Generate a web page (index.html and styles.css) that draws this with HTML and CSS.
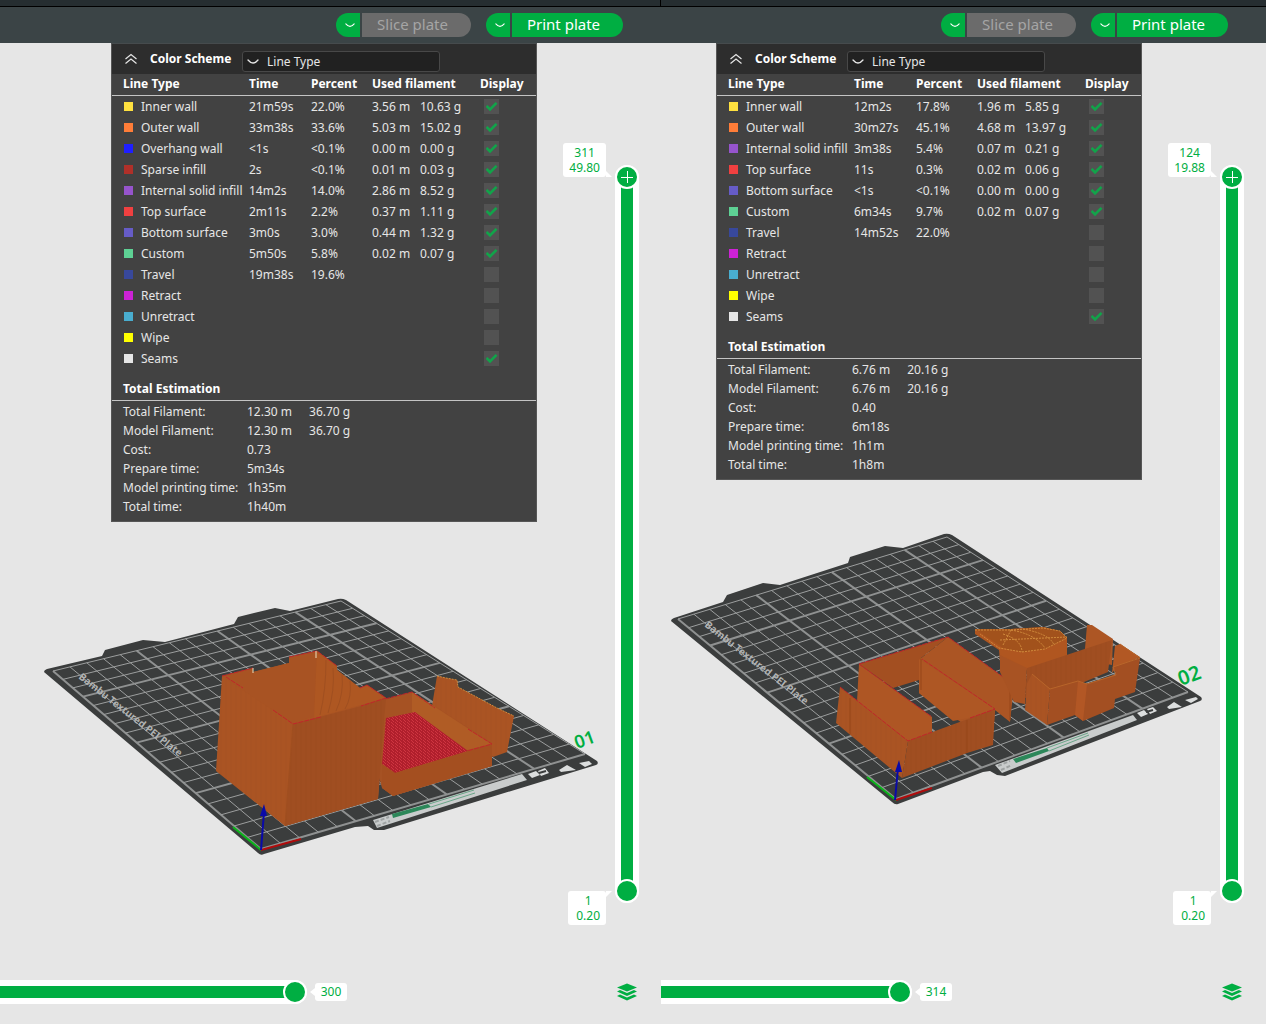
FILE: index.html
```html
<!DOCTYPE html>
<html lang="en">
<head>
<meta charset="utf-8">
<title>Plate preview</title>
<link rel="stylesheet" href="styles.css">
</head>
<body>
<svg class="defs" aria-hidden="true">
  <symbol id="chevron" viewBox="0 0 12 6"><path d="M1 1 Q6 7 11 1" fill="none" stroke="currentColor" stroke-width="1.3" stroke-linecap="round"/></symbol>
  <symbol id="collapse" viewBox="0 0 14 12"><path d="M1.500 6 L7 1.500 L12.500 6 M1.500 10.500 L7 6 L12.500 10.500" fill="none" stroke="currentColor" stroke-width="1.200"/></symbol>
  <symbol id="layers" viewBox="0 0 20 20"><path d="M10 1.500 L20 5.500 L10 9.500 L0 5.500Z M0 9.500 L3 8 L10 11 L17 8 L20 9.500 L10 14Z M0 14 L3 12.500 L10 15.500 L17 12.500 L20 14 L10 18.500Z" fill="currentColor"/></symbol>
  <pattern id="weave" width="4" height="3" patternUnits="userSpaceOnUse"><rect width="4" height="3" fill="#b01f2c"/><path d="M0 0 L2 2 M3 3 L4 2" stroke="#cf3541" stroke-width="1"/></pattern>
  <pattern id="ribs" width="5" height="8" patternUnits="userSpaceOnUse"><rect width="5" height="8" fill="#aa5423"/><path d="M1 0V8" stroke="#a65122" stroke-width="1"/></pattern>
  <pattern id="ribsDark" width="5" height="8" patternUnits="userSpaceOnUse"><rect width="5" height="8" fill="#a04e21"/><path d="M1 0V8" stroke="#9c4b1f" stroke-width="1"/></pattern>
</svg>
<main class="workspace">

<section class="pane" aria-label="Plate 01">
  <div class="tabstrip"></div>
  <div class="toolbar">
    <div class="split">
      <button class="split-menu" type="button" aria-label="Slice options"><svg class="chevron"><use href="#chevron"/></svg></button>
      <button class="split-main is-off" type="button" disabled>Slice plate</button>
    </div>
    <div class="split">
      <button class="split-menu" type="button" aria-label="Print options"><svg class="chevron"><use href="#chevron"/></svg></button>
      <button class="split-main" type="button">Print plate</button>
    </div>
  </div>
  <div class="viewport">
    <svg class="scene" viewBox="0 43 661 981" aria-hidden="true">
      <path class="plate" d="M44 672 Q44 670 47 669 L102 656 L105 650 L143 640 L165 642 L234 624 L238 617 L275 608 L290 611 L338 599 Q342 598 346 600 L597 761 Q599 764 596 765 L384 830 L374 830 L368 826 L355 827 L264 854 Q261 856 258 853Z"/>
      <g class="grid" data-corners="261,849 585,754 341,601 53,671"></g>
      <text class="brand" transform="translate(78 678) rotate(38)">Bambu Textured PEI Plate</text>
      <path d="M373 820 L522 774 L527 780 L377 828Z" fill="#c9cccc"/>
      <path d="M392 814 L428 804 L431 807 L393 818Z" fill="#2c8759"/>
      <path d="M429 804 L474 790 M431 807 L475 793" stroke="#6aa588" fill="none"/>
      <path d="M375 822 L389 817 M377 826 L390 821" stroke="#9ea2a2" stroke-width="2" stroke-dasharray="4 2"/>
      <path d="M528 774 L536 771 L540 775 L532 778Z M538 771 L545 768 L549 773 L541 776Z M559 770 L567 765 L576 770 L561 772Z M579 763 L589 761 L592 764 L585 767Z" fill="#dcdede"/>
      <path d="M539 773 L546 771" stroke="#3b3d3d" stroke-width="2"/>
      <text class="number" font-size="18" transform="translate(577 749) rotate(-20)">01</text>
      <path d="M437 676 L446 678 L457 680 L458 687 L497 708 L514 716 L507 752 L493 757 L431 712Z" fill="url(#ribs)"/>
      <path d="M437 676 L446 678 L457 680 L458 687 L497 708 L514 716" class="seam"/>
      <path d="M360 706 L412 692 L492 743 L492 766 L393 796 L382 788Z" fill="#a65223"/>
      <path d="M412 692 L412 713 L467 750 L492 744Z" fill="#b05c25"/>
      <path d="M386 718 L415 712 L468 751 L395 773 L382 764Z" fill="url(#weave)"/>
      <path d="M382 764 L395 773 L492 744 L492 766 L393 796 L382 788Z" fill="#a44f20"/>
      <path d="M385 699 L412 692 L435 708 M468 729 L492 744 L467 751" class="edge"/>
      <path d="M222 676 L253 668 L253 672 L289 663 L289 657 L317 651 L337 666 L337 670 L360 688 L367 685 L386 698 L378 799 L285 826 L216 771Z" fill="url(#ribs)"/>
      <path d="M317 651 L314 716 L293 723 L253 697 L222 676 L253 668 L253 672 L289 663 L289 657Z" fill="#a85323"/>
      <path d="M317 651 L337 666 L337 670 L360 688 L367 685 L386 698 L314 718Z" fill="#ae5722"/>
      <path d="M293 724 L361 706 L386 698 L378 799 L285 826Z" fill="url(#ribsDark)"/>
      <path d="M326 660 Q326 690 320 715 M333 668 Q335 690 328 713 M342 674 Q344 694 336 711 M350 681 Q352 697 345 709 M293 724 L285 826" stroke="#a04f20" stroke-width="1" fill="none"/>
      <path d="M222 676 L253 668 M226 677 L243 688 M273 710 L293 724 L321 717 M289 657 L317 651 L337 666 M360 688 L367 685 L386 698 L361 706" class="edge"/>
      <path d="M253 668V673 M316 651V658" stroke="#eee1bf"/>
      <path class="axis-y" d="M261 850 L233 827"/><path class="axis-x" d="M261 850 L301 839"/>
      <path class="axis-z" d="M261 850 L264 812"/><path d="M260 816 L264 804 L267 816Z" fill="#0a0aa8"/>
    </svg>

    <div class="stage">
      <section class="legend">
        <header class="legend-head">
          <button class="fold" type="button" aria-label="Collapse"><svg class="collapse"><use href="#collapse"/></svg></button>
          <label class="scheme" for="scheme1">Color Scheme</label>
          <div class="picker"><svg class="chevron"><use href="#chevron"/></svg><select id="scheme1"><option>Line Type</option></select></div>
        </header>
        <table class="lines">
          <colgroup><col class="c-name"><col class="c-time"><col class="c-pct"><col class="c-used"><col class="c-show"></colgroup>
          <thead><tr><th>Line Type</th><th>Time</th><th>Percent</th><th>Used filament</th><th>Display</th></tr></thead>
          <tbody>
            <tr><td><label for="a1"><i class="sw inner"></i>Inner wall</label></td><td>21m59s</td><td>22.0%</td><td><span>3.56 m</span>10.63 g</td><td><input id="a1" type="checkbox" checked></td></tr>
            <tr><td><label for="a2"><i class="sw outer"></i>Outer wall</label></td><td>33m38s</td><td>33.6%</td><td><span>5.03 m</span>15.02 g</td><td><input id="a2" type="checkbox" checked></td></tr>
            <tr><td><label for="a3"><i class="sw overhang"></i>Overhang wall</label></td><td>&lt;1s</td><td>&lt;0.1%</td><td><span>0.00 m</span>0.00 g</td><td><input id="a3" type="checkbox" checked></td></tr>
            <tr><td><label for="a4"><i class="sw sparse"></i>Sparse infill</label></td><td>2s</td><td>&lt;0.1%</td><td><span>0.01 m</span>0.03 g</td><td><input id="a4" type="checkbox" checked></td></tr>
            <tr><td><label for="a5"><i class="sw solid"></i>Internal solid infill</label></td><td>14m2s</td><td>14.0%</td><td><span>2.86 m</span>8.52 g</td><td><input id="a5" type="checkbox" checked></td></tr>
            <tr><td><label for="a6"><i class="sw top"></i>Top surface</label></td><td>2m11s</td><td>2.2%</td><td><span>0.37 m</span>1.11 g</td><td><input id="a6" type="checkbox" checked></td></tr>
            <tr><td><label for="a7"><i class="sw bottom"></i>Bottom surface</label></td><td>3m0s</td><td>3.0%</td><td><span>0.44 m</span>1.32 g</td><td><input id="a7" type="checkbox" checked></td></tr>
            <tr><td><label for="a8"><i class="sw custom"></i>Custom</label></td><td>5m50s</td><td>5.8%</td><td><span>0.02 m</span>0.07 g</td><td><input id="a8" type="checkbox" checked></td></tr>
            <tr><td><label for="a9"><i class="sw travel"></i>Travel</label></td><td>19m38s</td><td>19.6%</td><td></td><td><input id="a9" type="checkbox"></td></tr>
            <tr><td><label for="a10"><i class="sw retract"></i>Retract</label></td><td></td><td></td><td></td><td><input id="a10" type="checkbox"></td></tr>
            <tr><td><label for="a11"><i class="sw unretract"></i>Unretract</label></td><td></td><td></td><td></td><td><input id="a11" type="checkbox"></td></tr>
            <tr><td><label for="a12"><i class="sw wipe"></i>Wipe</label></td><td></td><td></td><td></td><td><input id="a12" type="checkbox"></td></tr>
            <tr><td><label for="a13"><i class="sw seams"></i>Seams</label></td><td></td><td></td><td></td><td><input id="a13" type="checkbox" checked></td></tr>
          </tbody>
        </table>
        <h2 class="total-title">Total Estimation</h2>
        <dl class="totals">
          <dt>Total Filament:</dt><dd><span>12.30 m</span><span>36.70 g</span></dd>
          <dt>Model Filament:</dt><dd><span>12.30 m</span><span>36.70 g</span></dd>
          <dt>Cost:</dt><dd>0.73</dd>
          <dt>Prepare time:</dt><dd>5m34s</dd>
          <dt>Model printing time:</dt><dd>1h35m</dd>
          <dt>Total time:</dt><dd>1h40m</dd>
        </dl>
      </section>
      <div class="layers">
        <div class="layers-fill"></div>
        <input class="layer-range high" type="range" min="1" max="311" value="311" aria-label="Top layer">
        <input class="layer-range low" type="range" min="1" max="311" value="1" aria-label="Bottom layer">
        <output class="bubble bubble-top">311<br>49.80</output>
        <output class="bubble bubble-bottom">1<br>0.20</output>
      </div>
    </div>

    <footer class="moves">
      <input class="move-range" type="range" min="0" max="300" value="300" aria-label="Move">
      <output class="count">300</output>
      <button class="layers-btn" type="button" aria-label="Layers"><svg class="layers-icon"><use href="#layers"/></svg></button>
    </footer>
  </div>
</section>

<section class="pane" aria-label="Plate 02">
  <div class="tabstrip"></div>
  <div class="toolbar">
    <div class="split">
      <button class="split-menu" type="button" aria-label="Slice options"><svg class="chevron"><use href="#chevron"/></svg></button>
      <button class="split-main is-off" type="button" disabled>Slice plate</button>
    </div>
    <div class="split">
      <button class="split-menu" type="button" aria-label="Print options"><svg class="chevron"><use href="#chevron"/></svg></button>
      <button class="split-main" type="button">Print plate</button>
    </div>
  </div>
  <div class="viewport">
    <svg class="scene" viewBox="661 43 605 981" aria-hidden="true">
      <path class="plate" d="M671 621 Q671 619 674 618 L723 602 L727 595 L763 583 L780 585 L848 563 L850 557 L885 546 L903 548 L944 534 Q948 533 952 535 L1201 697 Q1203 700 1200 701 L1005 776 L997 775 L990 771 L983 772 L898 804 Q895 805 892 802Z"/>
      <g class="grid" data-corners="896,799 1188,692 947,537 678,619"></g>
      <text class="brand" transform="translate(704 626) rotate(38)">Bambu Textured PEI Plate</text>
      <path d="M995 765 L1133 715 L1137 720 L1002 773Z" fill="#c9cccc"/>
      <path d="M1013 759 L1047 748 L1049 751 L1016 763Z" fill="#2c8759"/>
      <path d="M1047 748 L1088 733 M1049 751 L1089 735" stroke="#6aa588" fill="none"/>
      <path d="M998 766 L1010 761 M1001 770 L1012 765" stroke="#9ea2a2" stroke-width="2" stroke-dasharray="4 2"/>
      <path d="M1137 713 L1144 710 L1148 714 L1141 717Z M1147 709 L1153 707 L1157 711 L1150 714Z M1167 707 L1174 702 L1182 707 L1169 709Z M1185 700 L1196 697 L1198 699 L1191 703Z" fill="#dcdede"/>
      <path d="M1146 712 L1153 710" stroke="#3b3d3d" stroke-width="2"/>
      <text class="number" font-size="20" transform="translate(1181 686) rotate(-21)">02</text>

      <path d="M859 664 L948 637 L921 658 L919 680 L893 688Z" fill="#a34f21"/>
      <path d="M920 659 L948 637 L1014 685 L1010 722 L995 710 L993 735 L965 725 L919 693Z" fill="#ab5524"/>
      <path d="M919 659 L996 709 L994 713 L953 721 L919 693Z" fill="#ae5724"/>
      <path d="M859 664 L932 717 L932 733 L908 742 L857 702Z" fill="#ae5624"/>
      <path d="M840 687 L908 741 L902 778 L836 723Z" fill="url(#ribs)"/>
      <path d="M908 741 L995 709 L993 745 L967 753 L902 778Z" fill="url(#ribsDark)"/>
      <path d="M859 664 L932 717 M840 687 L908 741 L932 732 M970 718 L995 709 L922 659 M859 664 L948 637 L1014 685" class="edge"/>
      <path d="M850 698V734 M967 720V753 M1010 688V720 M921 659V690" stroke="#964719"/>

      <path d="M1087 625 L1092 625 L1113 639 L1112 665 L1084 660Z" fill="#ad5624"/>
      <path d="M975 629 L1011 629 L1043 627 L1060 631 L1067 638 L1067 660 L1028 670 L1000 662 L999 650 L975 634Z" fill="#b05620"/>
      <path d="M975 629 L1011 629 L1043 627 L1060 631 L1067 638 L1045 649 L1022 652 L1003 648Z" fill="#a2521c"/>
      <path d="M975 630 L1011 630 L1043 628 L1060 631 L1067 638 L1045 649 L1022 652 L999 648 L980 634 M1011 630 L1003 645 M1003 634 Q1022 640 1022 652 M1011 630 Q1035 634 1045 648 M1023 629 Q1050 634 1054 645 M1000 640 L1067 637" class="seam"/>
      <path d="M1000 655 L1027 668 L1025 704 L1014 702 L1000 672Z" fill="#a85323"/>
      <path d="M1027 668 L1112 640 L1108 672 L1084 682 L1050 690 L1025 698Z" fill="url(#ribsDark)"/>
      <path d="M1115 646 L1120 644 L1140 657 L1116 668 L1112 673Z" fill="#b25824"/>
      <path d="M1032 674 L1050 689 L1047 725 L1025 710 L1027 684Z" fill="url(#ribs)"/>
      <path d="M1050 689 L1078 681 L1087 684 L1116 674 L1114 667 L1140 658 L1135 692 L1115 699 L1114 708 L1083 721 L1075 715 L1047 725Z" fill="#a34f22"/>
      <path d="M1078 681 L1087 684 L1083 721 L1075 715Z" fill="#b25725"/>
      <path d="M1032 674 L1050 689 L1078 681 L1087 684 L1116 675 L1113 667 L1140 658 L1120 644" stroke="#b8652a" fill="none"/>
      <path class="axis-y" d="M896 800 L867 777"/><path class="axis-x" d="M896 800 L932 788"/>
      <path class="axis-z" d="M895 800 L898 768"/><path d="M895 772 L899 760 L902 772Z" fill="#0a0aa8"/>
    </svg>

    <div class="stage">
      <section class="legend">
        <header class="legend-head">
          <button class="fold" type="button" aria-label="Collapse"><svg class="collapse"><use href="#collapse"/></svg></button>
          <label class="scheme" for="scheme2">Color Scheme</label>
          <div class="picker"><svg class="chevron"><use href="#chevron"/></svg><select id="scheme2"><option>Line Type</option></select></div>
        </header>
        <table class="lines">
          <colgroup><col class="c-name"><col class="c-time"><col class="c-pct"><col class="c-used"><col class="c-show"></colgroup>
          <thead><tr><th>Line Type</th><th>Time</th><th>Percent</th><th>Used filament</th><th>Display</th></tr></thead>
          <tbody>
            <tr><td><label for="b1"><i class="sw inner"></i>Inner wall</label></td><td>12m2s</td><td>17.8%</td><td><span>1.96 m</span>5.85 g</td><td><input id="b1" type="checkbox" checked></td></tr>
            <tr><td><label for="b2"><i class="sw outer"></i>Outer wall</label></td><td>30m27s</td><td>45.1%</td><td><span>4.68 m</span>13.97 g</td><td><input id="b2" type="checkbox" checked></td></tr>
            <tr><td><label for="b3"><i class="sw solid"></i>Internal solid infill</label></td><td>3m38s</td><td>5.4%</td><td><span>0.07 m</span>0.21 g</td><td><input id="b3" type="checkbox" checked></td></tr>
            <tr><td><label for="b4"><i class="sw top"></i>Top surface</label></td><td>11s</td><td>0.3%</td><td><span>0.02 m</span>0.06 g</td><td><input id="b4" type="checkbox" checked></td></tr>
            <tr><td><label for="b5"><i class="sw bottom"></i>Bottom surface</label></td><td>&lt;1s</td><td>&lt;0.1%</td><td><span>0.00 m</span>0.00 g</td><td><input id="b5" type="checkbox" checked></td></tr>
            <tr><td><label for="b6"><i class="sw custom"></i>Custom</label></td><td>6m34s</td><td>9.7%</td><td><span>0.02 m</span>0.07 g</td><td><input id="b6" type="checkbox" checked></td></tr>
            <tr><td><label for="b7"><i class="sw travel"></i>Travel</label></td><td>14m52s</td><td>22.0%</td><td></td><td><input id="b7" type="checkbox"></td></tr>
            <tr><td><label for="b8"><i class="sw retract"></i>Retract</label></td><td></td><td></td><td></td><td><input id="b8" type="checkbox"></td></tr>
            <tr><td><label for="b9"><i class="sw unretract"></i>Unretract</label></td><td></td><td></td><td></td><td><input id="b9" type="checkbox"></td></tr>
            <tr><td><label for="b10"><i class="sw wipe"></i>Wipe</label></td><td></td><td></td><td></td><td><input id="b10" type="checkbox"></td></tr>
            <tr><td><label for="b11"><i class="sw seams"></i>Seams</label></td><td></td><td></td><td></td><td><input id="b11" type="checkbox" checked></td></tr>
          </tbody>
        </table>
        <h2 class="total-title">Total Estimation</h2>
        <dl class="totals">
          <dt>Total Filament:</dt><dd><span>6.76 m</span><span>20.16 g</span></dd>
          <dt>Model Filament:</dt><dd><span>6.76 m</span><span>20.16 g</span></dd>
          <dt>Cost:</dt><dd>0.40</dd>
          <dt>Prepare time:</dt><dd>6m18s</dd>
          <dt>Model printing time:</dt><dd>1h1m</dd>
          <dt>Total time:</dt><dd>1h8m</dd>
        </dl>
      </section>
      <div class="layers">
        <div class="layers-fill"></div>
        <input class="layer-range high" type="range" min="1" max="124" value="124" aria-label="Top layer">
        <input class="layer-range low" type="range" min="1" max="124" value="1" aria-label="Bottom layer">
        <output class="bubble bubble-top">124<br>19.88</output>
        <output class="bubble bubble-bottom">1<br>0.20</output>
      </div>
    </div>

    <footer class="moves">
      <input class="move-range" type="range" min="0" max="314" value="314" aria-label="Move">
      <output class="count">314</output>
      <button class="layers-btn" type="button" aria-label="Layers"><svg class="layers-icon"><use href="#layers"/></svg></button>
    </footer>
  </div>
</section>

</main>
<script src="scene.js"></script>
</body>
</html>
```
FILE: styles.css
```css
* { box-sizing: border-box; }

body {
  margin: 0;
  font: 12px/16px "Noto Sans", sans-serif;
  color: #e6e6e6;
  background: #e6e6e6;
}

button, select, input { font: inherit; color: inherit; margin: 0; }
button { border: 0; padding: 0; background: none; }

.defs { position: absolute; width: 0; height: 0; }

.workspace {
  display: grid;
  grid-template-columns: 661fr 605fr;
  min-height: 100vh;
}

.pane { display: flex; flex-direction: column; min-width: 0; }

.tabstrip {
  height: 7px;
  background: #262e31;
  border-bottom: 1px solid #000;
}
.pane:first-child .tabstrip { border-right: 1px solid #000; }

.toolbar {
  display: flex;
  justify-content: flex-end;
  align-items: center;
  gap: 15px;
  height: 36px;
  padding-right: 38px;
  background: #3b4446;
}

.split { display: flex; gap: 2px; height: 24px; }
.split-menu {
  display: grid;
  place-items: center;
  width: 24px;
  padding-left: 4px;
  border-radius: 12px 0 0 12px;
  background: #00ae42;
  color: #fff;
}
.split-main {
  width: 111px;
  padding: 0 8px 2px 0;
  border-radius: 0 12px 12px 0;
  background: #00ae42;
  color: #fff;
  font-size: 15px;
  line-height: 22px;
}
.split-main.is-off { width: 109px; background: #6b6b6b; color: #a5a5a5; }
.split-menu .chevron { width: 10px; height: 5px; }

.viewport {
  position: relative;
  display: flex;
  flex: 1;
  flex-direction: column;
}
.scene { position: absolute; inset: 0; width: 100%; height: 100%; }

.plate { fill: #3b3d3d; }
.grid path { fill: none; stroke: #9c9e9e; stroke-width: 1; }
.grid .major { stroke: #8f9191; stroke-width: 2; }
.brand { font: bold 10px "Noto Sans", sans-serif; fill: #b0b2b2; }
.number { font-family: "Noto Sans", sans-serif; font-weight: 600; fill: #00ae42; }
.edge { fill: none; stroke: #c0262a; stroke-width: 1; stroke-dasharray: 5 1; }
.seam { fill: none; stroke: #d08a3c; stroke-width: 1; stroke-dasharray: 2 1; }
.axis-x { stroke: #b00c0c; stroke-width: 2; }
.axis-y { stroke: #0ab41a; stroke-width: 2; }
.axis-z { stroke: #0a0aa8; stroke-width: 2; }

.stage {
  position: relative;
  display: flex;
  flex: 1;
  justify-content: flex-end;
  align-items: flex-start;
  gap: 78px;
  padding-right: 22px;
}

.legend {
  width: 426px;
  padding-bottom: 5px;
  border: 1px solid #565656;
  border-top-color: #464b4d;
  background: #424242;
}
.legend-head {
  display: flex;
  align-items: center;
  height: 30px;
  padding-left: 12px;
  background: #2d2d2d;
}
.fold { display: grid; width: 14px; height: 12px; }
.collapse { width: 14px; height: 12px; }
.scheme { width: 92px; margin-left: 12px; font-weight: bold; color: #fff; }
.picker {
  position: relative;
  width: 198px;
  align-self: flex-end;
  margin-bottom: 2px;
}
.picker .chevron { position: absolute; left: 5px; top: 8px; width: 12px; height: 6px; }
.picker select {
  appearance: none;
  display: block;
  width: 100%;
  height: 21px;
  padding: 0 8px 0 24px;
  border: 1px solid #484848;
  border-radius: 3px;
  background: #212121;
}

.lines { width: 100%; table-layout: fixed; border-collapse: separate; border-spacing: 0; }
.c-name { width: 137px; }
.c-time { width: 62px; }
.c-pct { width: 61px; }
.c-used { width: 108px; }
.lines th {
  height: 22px;
  padding: 0 0 2px;
  border-bottom: 1px solid #c4c4c4;
  text-align: left;
  color: #fff;
  white-space: nowrap;
}
.lines th:first-child { padding-left: 11px; }
.lines td { height: 21px; padding: 0; white-space: nowrap; }
.lines td:first-child { padding-left: 12px; }
.lines td:last-child { padding-left: 4px; }
.lines td span { display: inline-block; width: 48px; }
.lines label { display: flex; align-items: center; gap: 8px; }

.sw { width: 9px; height: 9px; }
.inner { background: #ffe13f; }
.outer { background: #ff7d38; }
.overhang { background: #1f1fff; }
.sparse { background: #b03029; }
.solid { background: #9654cc; }
.top { background: #f04040; }
.bottom { background: #665cc7; }
.custom { background: #5ed194; }
.travel { background: #38489b; }
.retract { background: #cd22d6; }
.unretract { background: #49adcf; }
.wipe { background: #ffff00; }
.seams { background: #e6e6e6; }

.lines input {
  appearance: none;
  display: grid;
  place-items: center;
  width: 15px;
  height: 15px;
  background: #525252;
}
.lines input:checked::before {
  content: "";
  width: 12px;
  height: 10px;
  background: #12a34a;
  clip-path: polygon(0 52%, 16% 34%, 38% 60%, 84% 4%, 100% 22%, 38% 98%);
}

.total-title {
  margin: 8px 0 0;
  padding-left: 11px;
  border-bottom: 1px solid #c4c4c4;
  font-size: 12px;
  line-height: 23px;
  color: #fff;
}
.totals {
  display: grid;
  grid-template-columns: 124px 1fr;
  margin: 1px 0 0;
  padding-left: 11px;
  line-height: 19px;
}
.totals dd { display: flex; gap: 17px; margin: 0; }

.layers {
  position: relative;
  align-self: stretch;
  width: 24px;
  margin: 122px 0 77px;
  border-radius: 12px;
  background: #fff;
}
.layers-fill { height: calc(100% - 24px); margin: 12px 6px; background: #00ae42; }
.layer-range {
  appearance: none;
  position: absolute;
  inset: 0;
  width: 24px;
  height: 100%;
  writing-mode: vertical-lr;
  direction: rtl;
  background: none;
  pointer-events: none;
}
.layer-range::-webkit-slider-thumb {
  appearance: none;
  width: 24px;
  height: 24px;
  border: 2px solid #fff;
  border-radius: 50%;
  background: #00ae42;
  pointer-events: auto;
}
.layer-range.high::-webkit-slider-thumb {
  background:
    linear-gradient(#fff, #fff) center / 12px 1px no-repeat,
    linear-gradient(#fff, #fff) center / 1px 12px no-repeat,
    #00ae42;
}

.bubble {
  position: absolute;
  right: 33px;
  height: 34px;
  padding: 2px 6px;
  border-radius: 3px;
  background: #fff;
  color: #00ae42;
  line-height: 15px;
  text-align: center;
}
.bubble-top { top: -22px; }
.bubble-bottom { bottom: -22px; padding-left: 8px; }
.bubble::after {
  content: "";
  position: absolute;
  left: 100%;
  width: 6px;
  height: 6px;
  background: #fff;
}
.bubble-top::after { bottom: 0; clip-path: polygon(0 0, 100% 100%, 0 100%); }
.bubble-bottom::after { top: 0; clip-path: polygon(0 0, 100% 0, 0 100%); }

.moves {
  position: relative;
  display: flex;
  align-items: center;
  height: 24px;
  margin-bottom: 20px;
  padding-right: 24px;
}
.move-range {
  appearance: none;
  flex: 1;
  min-width: 0;
  height: 24px;
  border-radius: 0 12px 12px 0;
  background: linear-gradient(#00ae42, #00ae42) 0 50% / calc(100% - 12px) 12px no-repeat, #fff;
}
.move-range::-webkit-slider-thumb {
  appearance: none;
  width: 24px;
  height: 24px;
  border: 2px solid #fff;
  border-radius: 50%;
  background: #00ae42;
}
.count {
  position: relative;
  width: 32px;
  margin: 0 270px 0 8px;
  border-radius: 3px;
  background: #fff;
  color: #00ae42;
  line-height: 18px;
  text-align: center;
}
.count::before {
  content: "";
  position: absolute;
  right: 100%;
  top: 5px;
  width: 5px;
  height: 8px;
  background: #fff;
  clip-path: polygon(100% 0, 0 50%, 100% 100%);
}
.layers-btn { display: grid; color: #00ae42; }
.layers-icon { width: 20px; height: 20px; }
```
FILE: scene.js
```js
// Draws the 180 mm bed grid (one cell per 10 mm) in perspective.
const CELLS = 18;

// Maps the unit square onto a quad given as origin, x end, far corner, y end.
function projector([[x0, y0], [x1, y1], [x2, y2], [x3, y3]]) {
  const dx1 = x1 - x2, dx2 = x3 - x2, sx = x0 - x1 + x2 - x3;
  const dy1 = y1 - y2, dy2 = y3 - y2, sy = y0 - y1 + y2 - y3;
  const det = dx1 * dy2 - dx2 * dy1;
  const g = (sx * dy2 - dx2 * sy) / det;
  const h = (dx1 * sy - sx * dy1) / det;
  return (u, v) => {
    const w = g * u + h * v + 1;
    const x = ((x1 - x0 + g * x1) * u + (x3 - x0 + h * x3) * v + x0) / w;
    const y = ((y1 - y0 + g * y1) * u + (y3 - y0 + h * y3) * v + y0) / w;
    return x.toFixed(1) + " " + y.toFixed(1);
  };
}

document.querySelectorAll(".grid").forEach((grid) => {
  const at = projector(grid.dataset.corners.split(" ").map((p) => p.split(",").map(Number)));
  for (let i = 0; i <= CELLS; i++) {
    const t = i / CELLS;
    const line = document.createElementNS("http://www.w3.org/2000/svg", "path");
    line.setAttribute("d", `M${at(t, 0)} L${at(t, 1)} M${at(0, t)} L${at(1, t)}`);
    if (i % 5 === 0) line.setAttribute("class", "major");
    grid.append(line);
  }
});
```
